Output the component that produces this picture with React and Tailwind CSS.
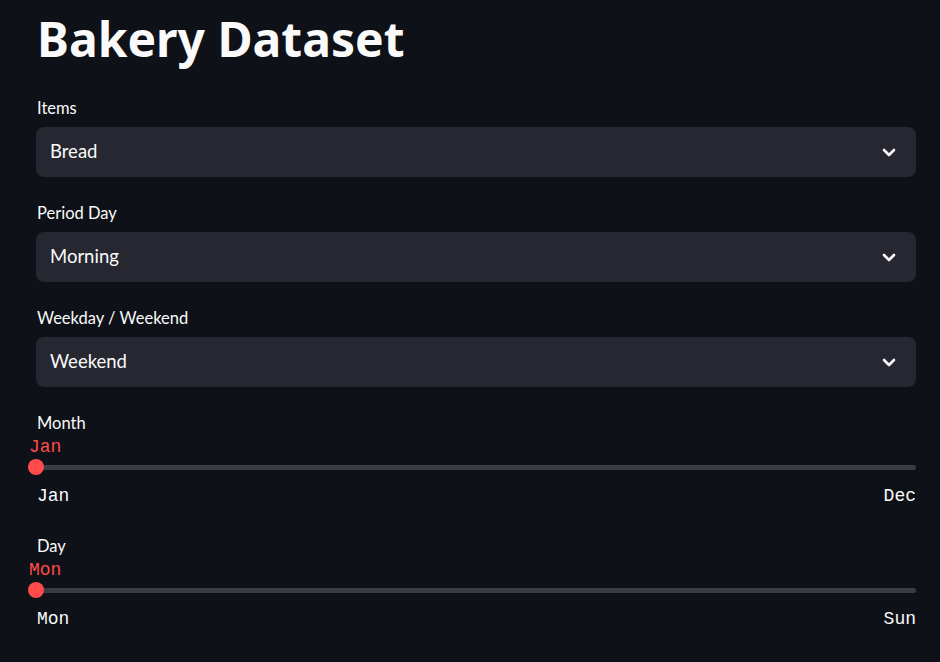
import React from "react";

const sans = { fontFamily: "Lato, 'Noto Sans', sans-serif" };
const title = { fontFamily: "'Noto Sans', Lato, sans-serif" };
const mono = { fontFamily: "'Liberation Mono', 'DejaVu Sans Mono', monospace" };

function Chevron() {
  return (
    <svg width="16" height="16" viewBox="0 0 16 16" fill="none">
      <path d="M3 6 L8 11 L13 6" stroke="#fafafa" strokeWidth="2.6" strokeLinecap="round" strokeLinejoin="round" />
    </svg>
  );
}

function Select({ label, value, first }) {
  return (
    <div className={first ? "mt-[17px]" : "mt-[23px]"}>
      <div className="h-[24px] leading-[24px] text-[16.5px] pl-[1px] pt-[1px] text-[#fafafa]">{label}</div>
      <div className="mt-[8px] h-[50px] rounded-[8px] bg-[#262730] pl-[14px] pr-[19px] flex items-center justify-between">
        <span className="text-[18.5px] text-[#fafafa]">{value}</span>
        <Chevron />
      </div>
    </div>
  );
}

function Slider({ label, value, min, max, mt }) {
  return (
    <div className={mt}>
      <div className="h-[24px] leading-[24px] text-[16.5px] pl-[1px] pt-[1px] text-[#fafafa]">{label}</div>
      <div className="mt-[3px] h-[20px] leading-[20px] text-[18px] text-[#ff4b4b] -ml-[7px]" style={mono}>
        {value}
      </div>
      <div className="relative h-[20px] flex items-center">
        <div className="w-full h-[5px] rounded-full bg-[#3a3c45]" />
        <div className="absolute left-[-8px] top-[2px] w-[16px] h-[16px] rounded-full bg-[#ff4b4b]" />
      </div>
      <div className="mt-[9px] h-[20px] leading-[20px] text-[18px] flex justify-between text-[#fafafa] pl-[1px]" style={mono}>
        <span>{min}</span>
        <span>{max}</span>
      </div>
    </div>
  );
}

export default function App() {
  return (
    <div className="min-h-[662px] w-full bg-[#0e1117] text-[#fafafa] pl-[36px] pr-[24px]" style={sans}>
      <h1 className="h-[78px] leading-[78px] text-[48px] font-bold pl-[1px]" style={title}>Bakery Dataset</h1>
      <Select label="Items" value="Bread" first />
      <Select label="Period Day" value="Morning" />
      <Select label="Weekday / Weekend" value="Weekend" />
      <Slider label="Month" value="Jan" min="Jan" max="Dec" mt="mt-[23px]" />
      <Slider label="Day" value="Mon" min="Mon" max="Sun" mt="mt-[27px]" />
    </div>
  );
}
